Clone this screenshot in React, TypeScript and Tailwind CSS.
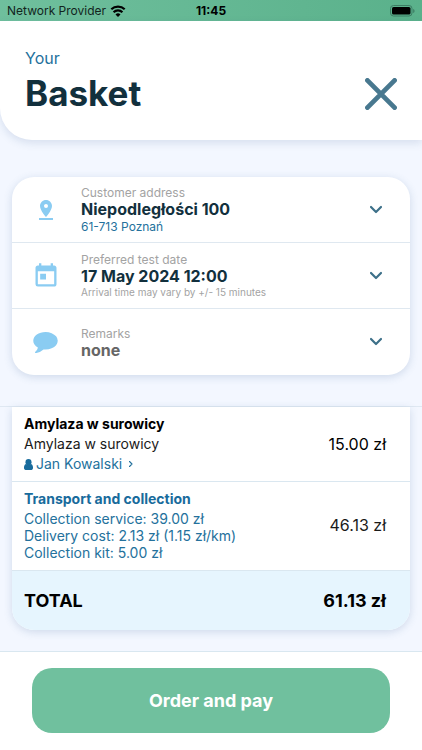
import React from 'react';
import { MdPinDrop, MdToday } from 'react-icons/md';

type IconProps = { className?: string };

const WifiIcon: React.FC<IconProps> = ({ className }) => (
    <svg viewBox="0 0 16 12" className={className} aria-hidden="true">
        <g fill="none" stroke="currentColor" strokeWidth="2.200">
            <path d="M1.300 4.300a9.600 9.600 0 0 1 13.400 0" />
            <path d="M3.600 7.200a6.200 6.200 0 0 1 8.800 0" />
        </g>
        <path d="M8 12 5.500 9.400a3.600 3.600 0 0 1 5 0z" fill="currentColor" />
    </svg>
);

const BatteryIcon: React.FC<IconProps> = ({ className }) => (
    <svg viewBox="0 0 25 12" className={className} aria-hidden="true">
        <rect x="0.500" y="0.500" width="21.500" height="10.500" rx="3" fill="none" stroke="#3d7d64" strokeWidth="1" />
        <rect x="2" y="2" width="18.500" height="7.500" rx="1.600" fill="#000" />
        <path d="M23.200 4v4c.9-.3 1.300-1.100 1.300-2S24.100 4.300 23.200 4z" fill="#3d7d64" />
    </svg>
);

const CloseIcon: React.FC<IconProps> = ({ className }) => (
    <svg viewBox="0 0 32 32" className={className} fill="none" stroke="currentColor" strokeWidth="4.800" strokeLinecap="round" aria-hidden="true">
        <path d="M2.400 2.400l27.200 27.200M29.600 2.400L2.400 29.600" />
    </svg>
);

const ChevronIcon: React.FC<IconProps> = ({ className }) => (
    <svg viewBox="0 0 24 24" className={className} fill="none" stroke="currentColor" strokeWidth="2.200" strokeLinecap="round" strokeLinejoin="round" aria-hidden="true">
        <path d="M7 9l5 5 5-5" />
    </svg>
);

const CommentIcon: React.FC<IconProps> = ({ className }) => (
    <svg viewBox="0 256 1792 1536" className={className} fill="currentColor" aria-hidden="true">
        <path d="M1792 896q0 174-120 321.500t-326 233-450 85.500q-70 0-145-8-198 175-460 242-49 14-114 22-17 2-30.500-9t-17.500-29v-1q-3-4-.5-12t2-10 4.500-9.500l6-9 7-8.500 8-9q7-8 31-34.500t34.500-38 31-39.500 32.500-51 27-59 26-76q-157-89-247.500-220t-90.500-281q0-130 71-248.500t191-204.500 286-136.500 348-50.500q244 0 450 85.500t326 233 120 321.500z" />
    </svg>
);

const UserIcon: React.FC<IconProps> = ({ className }) => (
    <svg viewBox="256 128 1280 1536" className={className} fill="currentColor" aria-hidden="true">
        <circle cx="896" cy="560" r="430" />
        <path d="M1536 1399q0 109-62.500 187t-150.500 78h-854q-88 0-150.500-78t-62.500-187q0-85 8.500-160.500t31.500-152 58.500-131 94-89 134.500-34.500q131 128 313 128t313-128q76 0 134.500 34.500t94 89 58.500 131 31.500 152 8.500 160.500z" />
    </svg>
);

interface DetailRowProps {
    icon: React.ReactNode;
    label: string;
    children: React.ReactNode;
}

const DetailRow: React.FC<DetailRowProps> = ({ icon, label, children }) => (
    <button type="button" className="flex w-full items-center border-b border-[#dfe8f0] min-h-[66px] text-left last:border-b-0">
        <span className="mr-0.5 flex w-[67px] shrink-0 justify-center text-[#8accf2]">{icon}</span>
        <span className="flex min-w-0 flex-1 flex-col">
            <span className="text-[12px] leading-[17px] text-[#a3a3a3]">{label}</span>
            {children}
        </span>
        <ChevronIcon className="mr-[22px] size-6 shrink-0 text-[#3d7089]" />
    </button>
);

const App: React.FC = () => {
    return (
        <div className="flex min-h-screen flex-col bg-[#f3f7ff] font-[Inter,sans-serif] text-black">
            {/* Status bar */}
            <div className="grid h-[21px] grid-cols-3 items-center bg-linear-to-r from-[#6fbf9d] to-[#5ab18b] px-[7px] text-[12px] leading-[16px]">
                <div className="flex items-center gap-1 whitespace-nowrap text-[#12251d]">
                    Network Provider
                    <WifiIcon className="h-3 w-4 text-black" />
                </div>
                <div className="text-center font-bold">11:45</div>
                <BatteryIcon className="h-3 w-[25px] justify-self-end" />
            </div>

            <header className="rounded-bl-[32px] bg-white px-[25px] pt-[25px] pb-[23px] shadow-[0_3px_8px_rgba(60,100,150,0.16)]">
                <p className="text-[16px] leading-6 text-[#24719c]">Your</p>
                <div className="flex items-center justify-between">
                    <h1 className="text-[35px] leading-[47px] font-bold text-[#12303d]">Basket</h1>
                    <button type="button" aria-label="Close">
                        <CloseIcon className="size-8 text-[#48788f]" />
                    </button>
                </div>
            </header>

            <main className="flex-1 pt-[37px]">
                {/* Order details */}
                <section className="mx-3 overflow-hidden rounded-[22px] bg-white shadow-[0_2px_9px_rgba(60,100,150,0.2)]">
                    <DetailRow icon={<MdPinDrop className="size-6" />} label="Customer address">
                        <span className="text-[16px] leading-[17px] font-bold text-[#12303d]">Niepodległości 100</span>
                        <span className="text-[12px] leading-[17px] text-[#24719c]">61-713 Poznań</span>
                    </DetailRow>
                    <DetailRow icon={<MdToday className="size-7" />} label="Preferred test date">
                        <span className="text-[16px] leading-[17px] font-bold text-[#12303d]">17 May 2024 12:00</span>
                        <span className="text-[10px] leading-[15px] text-[#a3a3a3]">Arrival time may vary by +/- 15 minutes</span>
                    </DetailRow>
                    <DetailRow icon={<CommentIcon className="h-[21px] w-[25px]" />} label="Remarks">
                        <span className="text-[16px] leading-[17px] font-bold text-[#666]">none</span>
                    </DetailRow>
                </section>

                {/* Basket items */}
                <section className="mt-[31px] border-t border-[#dfe8f2] px-3 pb-[21px]">
                    <div className="overflow-hidden rounded-b-[22px] bg-white shadow-[0_2px_9px_rgba(60,100,150,0.2)]">
                        <div className="flex items-center justify-between border-b border-[#dae7f0] py-[7px] pr-6 pl-3">
                            <div className="text-[14px] leading-5">
                                <h2 className="font-bold">Amylaza w surowicy</h2>
                                <p className="text-[#1a1a1a]">Amylaza w surowicy</p>
                                <button type="button" className="flex items-center gap-[3px] text-[#24719c]">
                                    <UserIcon className="h-[11px] w-[9px] text-[#186b9c]" />
                                    Jan Kowalski
                                    <ChevronIcon className="size-3 -rotate-90" />
                                </button>
                            </div>
                            <span className="text-[16px]">15.00 zł</span>
                        </div>
                        <div className="flex items-center justify-between border-b border-[#dae7f0] pt-1.5 pr-6 pb-[9px] pl-3 text-[#24719c]">
                            <div>
                                <h2 className="text-[14px] leading-[22px] font-bold text-[#186b9c]">Transport and collection</h2>
                                <ul className="text-[14px] leading-[17px]">
                                    <li>Collection service: 39.00 zł</li>
                                    <li>Delivery cost: 2.13 zł (1.15 zł/km)</li>
                                    <li>Collection kit: 5.00 zł</li>
                                </ul>
                            </div>
                            <span className="text-[16px] text-[#1a1a1a]">46.13 zł</span>
                        </div>
                        <div className="flex items-center justify-between bg-[#e6f5fe] pr-6 pl-3 text-[18px] leading-[59px] font-bold">
                            <span>TOTAL</span>
                            <span>61.13 zł</span>
                        </div>
                    </div>
                </section>
            </main>

            <footer className="border-t border-[#d9e7f0] bg-white px-8 pt-4 pb-[17px]">
                <button type="button" className="h-[65px] w-full rounded-[20px] bg-[#70c09e] text-[18px] font-bold text-white">
                    Order and pay
                </button>
            </footer>
        </div>
    );
};

export default App;
